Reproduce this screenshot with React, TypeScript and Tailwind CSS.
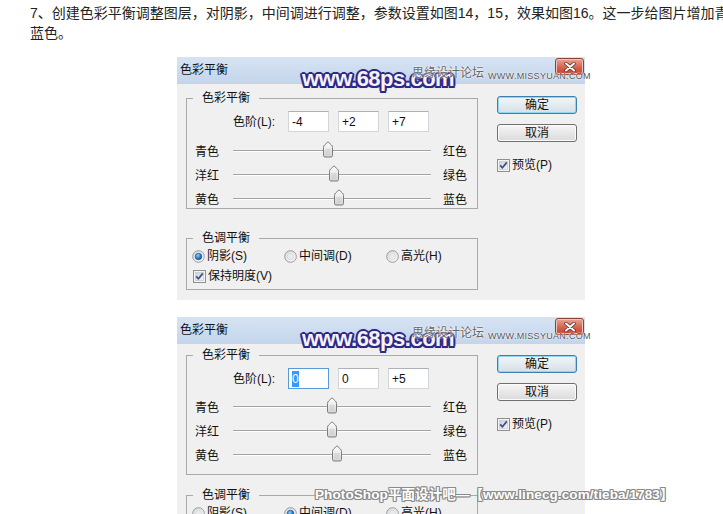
import React from "react";

function CheckBox() {
  return (
    <svg width="13" height="13" viewBox="0 0 13 13" className="shrink-0">
      <defs>
        <linearGradient id="cbg" x1="0" y1="0" x2="1" y2="1">
          <stop offset="0" stopColor="#cbcfd5" />
          <stop offset="1" stopColor="#f7f7f7" />
        </linearGradient>
      </defs>
      <rect x="0.5" y="0.5" width="12" height="12" fill="#f4f4f4" stroke="#8e8f8f" />
      <rect x="2.5" y="2.5" width="8" height="8" fill="url(#cbg)" stroke="#c9ccd1" strokeWidth="0.8" />
      <path d="M3.2 6.4 L5.4 8.8 L9.8 3.4" fill="none" stroke="#3a4f86" strokeWidth="1.7" />
    </svg>
  );
}

function Radio({ checked }: { checked: boolean }) {
  return (
    <svg width="13" height="13" viewBox="0 0 13 13" className="shrink-0">
      <defs>
        <linearGradient id="rbg" x1="0" y1="0" x2="1" y2="1">
          <stop offset="0" stopColor="#d6d8db" />
          <stop offset="1" stopColor="#ffffff" />
        </linearGradient>
        <radialGradient id="rdot" cx="0.4" cy="0.35" r="0.7">
          <stop offset="0" stopColor="#8ad3f7" />
          <stop offset="0.6" stopColor="#2a7bc8" />
          <stop offset="1" stopColor="#0f3f86" />
        </radialGradient>
      </defs>
      <circle cx="6.5" cy="6.5" r="5.8" fill="url(#rbg)" stroke="#8e8f8f" strokeWidth="0.9" />
      {checked ? (
        <circle cx="6.5" cy="6.5" r="3.3" fill="url(#rdot)" stroke="#1c4f8e" strokeWidth="0.6" />
      ) : (
        <circle cx="6.5" cy="6.5" r="3.3" fill="#e9eaec" stroke="#d0d2d5" strokeWidth="0.6" />
      )}
    </svg>
  );
}

function Thumb() {
  return (
    <svg width="12" height="17" viewBox="0 0 12 17">
      <defs>
        <linearGradient id="thg" x1="0" y1="0" x2="0" y2="1">
          <stop offset="0" stopColor="#ffffff" />
          <stop offset="1" stopColor="#d4d4d4" />
        </linearGradient>
      </defs>
      <path
        d="M1.5 6.5 Q1.5 5 2.6 4 L6 0.8 L9.4 4 Q10.5 5 10.5 6.5 V14.3 Q10.5 16 9 16 H3 Q1.5 16 1.5 14.3 Z"
        fill="url(#thg)"
        stroke="#7c7c7c"
        strokeWidth="1"
      />
      <rect x="3.5" y="8" width="5" height="6" fill="#c9c9c9" opacity="0.5" />
    </svg>
  );
}

function SliderRow({ left, right, value }: { left: string; right: string; value: number }) {
  const pos = 99 + value * 0.99 - 6;
  return (
    <div className="flex items-center h-[16px] pl-[8px]">
      <div className="w-[38px]">{left}</div>
      <div className="relative w-[198px] h-[16px]">
        <div className="absolute left-0 right-0 top-[6px] h-[1px] bg-[#a4a4a4] shadow-[0_1px_0_#ffffff]" />
        <div className="absolute top-[-3px]" style={{ left: pos }}>
          <Thumb />
        </div>
      </div>
      <div className="ml-[12px]">{right}</div>
    </div>
  );
}

function CloseButton() {
  return (
    <div className="absolute right-[1px] top-[1px] w-[29px] h-[17px] rounded-[3px] border border-[#8a4236] bg-linear-to-b from-[#e7a595] via-[#d66a55] to-[#c2412c] shadow-[inset_0_0_0_1px_#f2c3b8] flex items-center justify-center">
      <svg width="12" height="10" viewBox="0 0 12 10">
        <path d="M2 1.5 L10 8.5 M10 1.5 L2 8.5" stroke="#5b2a22" strokeWidth="3.4" strokeLinecap="round" />
        <path d="M2 1.5 L10 8.5 M10 1.5 L2 8.5" stroke="#ffffff" strokeWidth="2" strokeLinecap="round" />
      </svg>
    </div>
  );
}

function Input({ children, focused }: { children: React.ReactNode; focused?: boolean }) {
  return (
    <div
      className={
        focused
          ? "w-[41px] h-[21px] bg-white border border-[#5a9ad8] flex items-center pl-[3px]"
          : "w-[41px] h-[21px] bg-white border border-[#d2d6db] border-t-[#aeb2b8] flex items-center pl-[3px]"
      }
    >
      {children}
    </div>
  );
}

type DialogProps = {
  values: [string, string, string];
  sliders: [number, number, number];
  radio: number;
  second?: boolean;
};

function Dialog({ values, sliders, radio, second }: DialogProps) {
  return (
    <div className="relative w-[408px] h-[243px] bg-[#f0f0f0] text-[12px] leading-[16px] text-[#111] [font-family:'Liberation_Sans','Noto_Sans_CJK_SC',sans-serif]">
      <div className="relative h-[27px] bg-linear-to-b from-[#d6e3f3] to-[#c4d5eb] pl-[3px] pt-[4px] [font-family:'Noto_Sans_CJK_SC',sans-serif]">
        色彩平衡
        <CloseButton />
      </div>

      <div className="flex pl-[9px]">
        <div className={second ? "w-[292px] mt-[11px] flex flex-col" : "w-[292px] mt-[14px] flex flex-col"}>
          <div
            className={
              second
                ? "relative h-[120px] border border-[#a9a9a9] pt-[12px] flex flex-col"
                : "relative h-[111px] border border-[#a9a9a9] pt-[12px] flex flex-col"
            }
          >
            <div className="absolute left-[6px] top-[-9px] px-[9px] bg-[#f0f0f0]">色彩平衡</div>
            <div className="flex items-center h-[21px] pl-[46px]">
              <div className="w-[48px]">色阶(L):</div>
              <div className="ml-[7px] flex gap-[9px]">
                <Input focused={second}>
                  {second ? <span className="bg-[#3399ff] text-white">0</span> : values[0]}
                </Input>
                <Input>{values[1]}</Input>
                <Input>{values[2]}</Input>
              </div>
            </div>
            <div className={second ? "mt-[11px] flex flex-col gap-[8px]" : "mt-[12px] flex flex-col gap-[8px]"}>
              <SliderRow left="青色" right="红色" value={sliders[0]} />
              <SliderRow left="洋红" right="绿色" value={sliders[1]} />
              <SliderRow left="黄色" right="蓝色" value={sliders[2]} />
            </div>
          </div>

          <div
            className={
              second
                ? "relative mt-[20px] h-[52px] border border-[#a9a9a9] pt-[9px] flex flex-col gap-[4px]"
                : "relative mt-[29px] h-[52px] border border-[#a9a9a9] pt-[9px] flex flex-col gap-[4px]"
            }
          >
            <div className="absolute left-[6px] top-[-9px] px-[9px] bg-[#f0f0f0]">色调平衡</div>
            <div className="flex items-center h-[16px] pl-[5px]">
              <div className="w-[92px] flex items-center gap-[2px]">
                <Radio checked={radio === 0} />
                <span>阴影(S)</span>
              </div>
              <div className="w-[102px] flex items-center gap-[2px]">
                <Radio checked={radio === 1} />
                <span>中间调(D)</span>
              </div>
              <div className="flex items-center gap-[2px]">
                <Radio checked={radio === 2} />
                <span>高光(H)</span>
              </div>
            </div>
            <div className="flex items-center h-[16px] pl-[6px] gap-[2px]">
              <CheckBox />
              <span>保持明度(V)</span>
            </div>
          </div>
        </div>

        <div className={second ? "ml-[19px] mt-[11px] w-[80px] flex flex-col" : "ml-[19px] mt-[12px] w-[80px] flex flex-col"}>
          <div className="h-[18px] rounded-[3px] border border-[#3c7fb1] bg-linear-to-b from-[#f3f6f8] to-[#d5e0e8] shadow-[inset_0_0_0_1px_#8fd6f3] flex items-center justify-center">
            确定
          </div>
          <div className="mt-[10px] h-[18px] rounded-[3px] border border-[#707070] bg-linear-to-b from-[#f6f6f6] to-[#dadada] shadow-[inset_0_0_0_1px_#fbfbfb] flex items-center justify-center">
            取消
          </div>
          <div className="mt-[15px] flex items-center gap-[2px]">
            <CheckBox />
            <span>预览(P)</span>
          </div>
        </div>
      </div>

      <div className="absolute left-[125px] top-[9px] text-[22px] leading-[26px] font-bold tracking-[-0.5px] text-[#f4f2ff] [font-family:'Liberation_Sans',sans-serif] [text-shadow:2px_0_0_#2e2884,-2px_0_0_#2e2884,0_2px_0_#2e2884,0_-2px_0_#2e2884,1.5px_1.5px_0_#2e2884,-1.5px_-1.5px_0_#2e2884,1.5px_-1.5px_0_#2e2884,-1.5px_1.5px_0_#2e2884,0_0_3px_#1c1660]">
        www.68ps.com
      </div>
      <div className="absolute left-[235px] top-[7px] text-[12px] leading-[16px] text-[#666] [font-family:'Noto_Sans_CJK_SC',sans-serif] [text-shadow:0_0_2px_#ffffff,0_0_2px_#ffffff]">
        思缘设计论坛
      </div>
      <div className="absolute left-[311px] top-[14px] text-[9px] leading-[10px] text-[#555] tracking-[0.3px] [font-family:'Liberation_Sans',sans-serif] [text-shadow:0_0_2px_#ffffff,0_0_1px_#ffffff]">
        WWW.MISSYUAN.COM
      </div>
    </div>
  );
}

export default function App() {
  return (
    <div className="relative w-[723px] h-[514px] overflow-hidden bg-white">
      <p className="pl-[30px] pt-[3px] text-[14px] leading-[20px] text-[#222] whitespace-nowrap [font-family:'Liberation_Sans','Noto_Sans_CJK_SC',sans-serif]">
        7、创建色彩平衡调整图层，对阴影，中间调进行调整，参数设置如图14，15，效果如图16。这一步给图片增加青
        <br />
        蓝色。
      </p>
      <div className="ml-[177px] mt-[14px]">
        <Dialog values={["-4", "+2", "+7"]} sliders={[-4, 2, 7]} radio={0} />
      </div>
      <div className="ml-[177px] mt-[17px]">
        <Dialog values={["0", "0", "+5"]} sliders={[0, 0, 5]} radio={1} second />
      </div>
      <div className="absolute left-[315px] top-[487px] text-[13.5px] leading-[16px] font-bold tracking-[0.1px] text-white whitespace-nowrap [font-family:'Liberation_Sans','Noto_Sans_CJK_SC',sans-serif] [text-shadow:1px_0_0_#8a8a8a,-1px_0_0_#8a8a8a,0_1px_0_#8a8a8a,0_-1px_0_#8a8a8a,1px_1px_0_#8a8a8a,-1px_-1px_0_#8a8a8a,1px_-1px_0_#8a8a8a,-1px_1px_0_#8a8a8a]">
        PhotoShop平面设计吧—【www.linecg.com/tieba/1783】
      </div>
    </div>
  );
}
